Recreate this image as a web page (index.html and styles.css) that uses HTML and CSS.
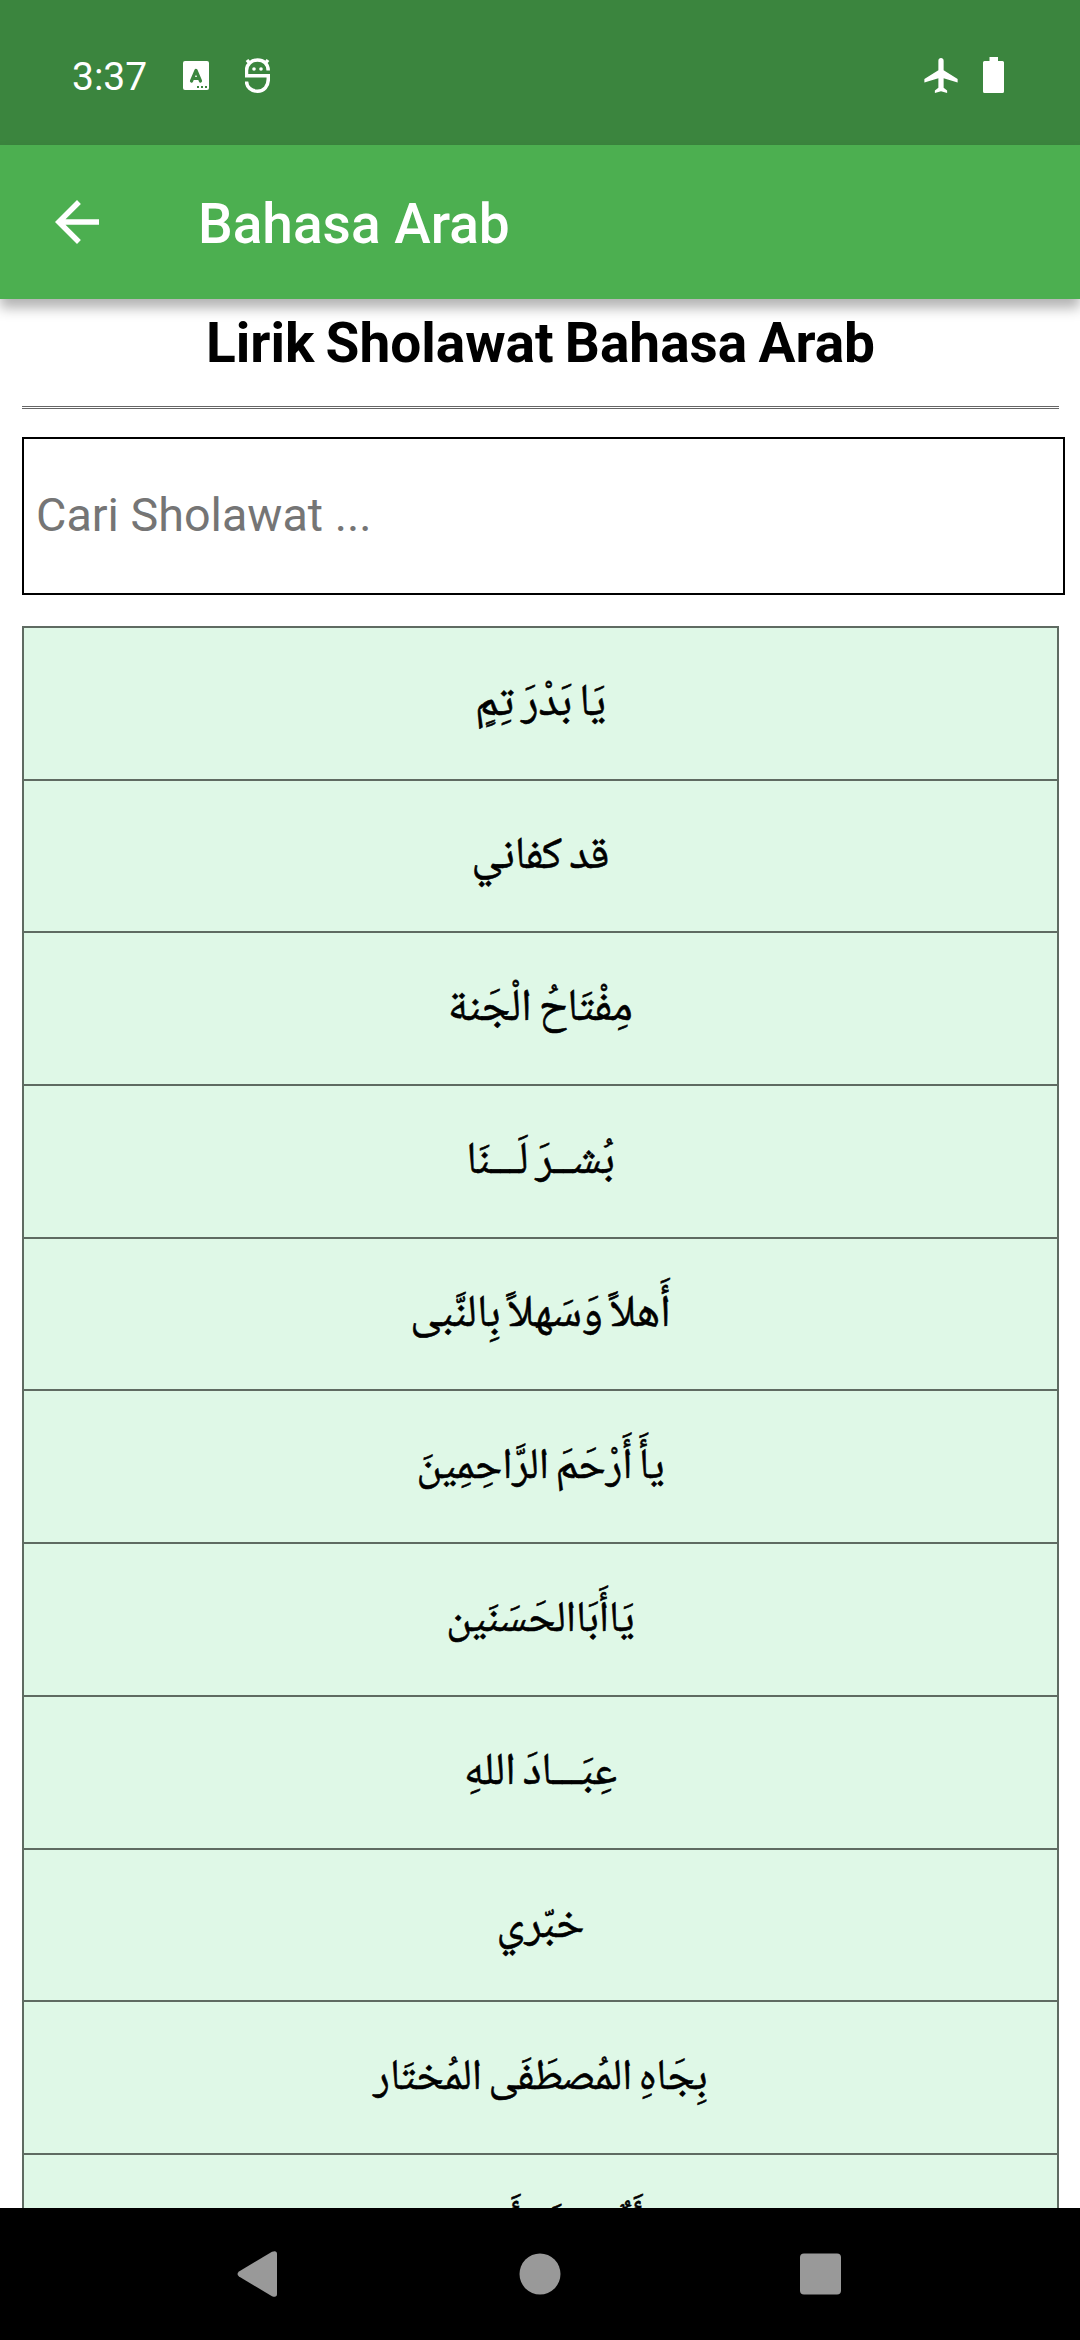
FILE: index.html
```html
<!DOCTYPE html>
<html lang="id">

<head>
    <meta charset="utf-8">
    <title>Lirik Sholawat Bahasa Arab</title>
    <link rel="stylesheet" href="styles.css">
</head>
<body>
    <div class="status">
        <span class="jam">3:37</span>
        <svg class="ikonA" viewBox="0 0 26 29">
            <rect width="26" height="29" rx="2" fill="#fff"/>
            <path d="M8.500 20L13 9.500l4.500 10.500M10 17.500h6" fill="none" stroke="#3b853e" stroke-width="3.200" stroke-linecap="round" stroke-linejoin="round"/>
            <path d="M14 25h2v2h-2zM18 25h2v2h-2zM22 25h2v2h-2z" fill="#3b853e"/>
        </svg>
        <svg class="ikonS" viewBox="0 0 25 35">
            <path d="M23.200 12.500C23.200 6 18.500 2 12.500 2S1.500 6.500 1.500 12.500V17.800H23.300V21C23.300 28.500 19 33.200 12.500 33.200S1.700 29 1.500 23.500M4.500 5L2 2M20.500 5l2.500-3" fill="none" stroke="#fff" stroke-width="3.500"/>
            <circle cx="9" cy="11" r="1.800" fill="#fff"/>
            <circle cx="16" cy="11" r="1.800" fill="#fff"/>
        </svg>
        <svg class="pesawat" viewBox="2.500 2 19 20">
            <path d="M21.500 16v-2l-8-5V3.500c0-.830-.670-1.500-1.500-1.500s-1.500.670-1.500 1.500V9l-8 5v2l8-2.500V19l-2 1.500V22l3.500-1 3.500 1v-1.500l-2-1.500v-5.500l8 2.500z" fill="#fff"/>
        </svg>
        <svg class="baterai" viewBox="0 0 21 36">
            <path d="M6.500 0h8.500v4h4.500q1.500 0 1.500 1.500v29q0 1.500-1.500 1.500h-18q-1.500 0-1.500-1.500v-29Q0 4 1.500 4h5z" fill="#fff"/>
        </svg>
    </div>
    <div class="toolbar">
        <svg class="kembali" viewBox="0 0 24 24">
            <path d="M20 11H7.830l5.590-5.590L12 4l-8 8 8 8 1.410-1.410L7.830 13H20v-2z" fill="#fff"/>
        </svg>
        <span class="judul">Bahasa Arab</span>
    </div>
    <div class="isi">
        <h1>Lirik Sholawat Bahasa Arab</h1>
        <hr>
        <input class="cari" type="text" placeholder="Cari Sholawat ...">
        <ul class="daftar" dir="rtl" lang="ar">
            <li>يَا بَدْرَ تِمٍ</li>
            <li>قد كفاني</li>
            <li>مِفْتَاحُ الْجَنة</li>
            <li>بُشــرَ لَـــنَا</li>
            <li>أَهلاً وَسَهلاً بِالنَّبى</li>
            <li>يأَ أَرْحَمَ الرَّاحِمِينَ</li>
            <li>يَاأَبَاالحَسَنَين</li>
            <li>عِبَـــادَ اللهِ</li>
            <li>خبّري</li>
            <li>بِجَاهِ المُصطَفَى المُختَار</li>
            <li>أَلٌمَ سَلَم أَحمَن</li>
        </ul>
    </div>
    <div class="navigasi">
        <svg viewBox="0 0 46 46"><path d="M2 20.500L35 .800Q40 -1 40 3V43Q40 47 35 45.200L2 25.500Q-1 23 2 20.500z" fill="#999"/></svg>
        <svg viewBox="0 0 46 46"><circle cx="23" cy="23" r="20.500" fill="#999"/></svg>
        <svg viewBox="0 0 46 46"><rect x="3" y="2.500" width="41" height="41" rx="4" fill="#999"/></svg>
    </div>
</body>

</html>
```
FILE: styles.css
```css
body {
    margin: 0;
    height: 2340px;
    display: flex;
    flex-direction: column;
    overflow: hidden;
    background: #fff;
    font-family: Roboto, sans-serif;
}
.status {
    height: 145px;
    flex: none;
    display: flex;
    align-items: center;
    box-sizing: border-box;
    padding: 6px 76px 0 72px;
    background: #3b853e;
    color: #fff;
}
.jam {
    width: 111px;
    padding-top: 2px;
    font-size: 39px;
}
.ikonA {
    width: 26px;
    height: 29px;
}
.ikonS {
    width: 25px;
    height: 35px;
    margin-left: 36px;
}
.pesawat {
    width: 34px;
    height: 35px;
    margin-left: auto;
}
.baterai {
    width: 21px;
    height: 36px;
    margin: 0 0 1px 25px;
}
.toolbar {
    height: 154px;
    flex: none;
    display: flex;
    align-items: center;
    position: relative;
    background: #4caf50;
    color: #fff;
    box-shadow: 0 9px 12px rgba(0, 0, 0, 0.3);
}
.kembali {
    width: 66px;
    height: 66px;
    margin-left: 44px;
}
.judul {
    margin-left: 88px;
    padding-top: 4px;
    font-size: 55px;
    font-weight: 500;
}
.isi {
    flex: 1;
    min-height: 0;
    overflow: hidden;
    padding: 0 21px 0 22px;
}
h1 {
    height: 107px;
    margin: 0;
    font-size: 55px;
    line-height: 89px;
    word-spacing: -2.5px;
    text-align: center;
}
hr {
    margin: 0 0 28px;
    border: 0;
    border-top: 3px double #666;
}
.cari {
    display: block;
    width: 1043px;
    height: 158px;
    box-sizing: border-box;
    margin: 0 0 31px;
    padding: 0 12px 2px;
    border: 2px solid #000;
    font-family: Roboto, sans-serif;
    font-size: 46.7px;
}
.cari::placeholder {
    color: #757575;
}
.daftar {
    margin: 0;
    padding: 0;
    list-style: none;
    border: solid #5f6b62;
    border-width: 0 2px;
    background: #dff8e7;
    font-family: "Noto Naskh Arabic", Amiri, "Scheherazade New", "Liberation Serif", serif;
    font-size: 45px;
    word-spacing: -3px;
    color: #000;
    -webkit-text-stroke: 0.6px #000;
}
.daftar li {
    height: 152.7px;
    box-sizing: border-box;
    border-top: 2px solid #5f6b62;
    line-height: 155px;
    text-align: center;
}
/* baris dengan huruf lebih lebar */
.daftar li:nth-child(6),
.daftar li:nth-child(7),
.daftar li:nth-child(10) {
    font-size: 43px;
}
.navigasi {
    height: 132px;
    flex: none;
    display: flex;
    align-items: center;
    justify-content: center;
    gap: 234px;
    background: #000;
}
.navigasi svg {
    width: 46px;
    height: 46px;
}
```
